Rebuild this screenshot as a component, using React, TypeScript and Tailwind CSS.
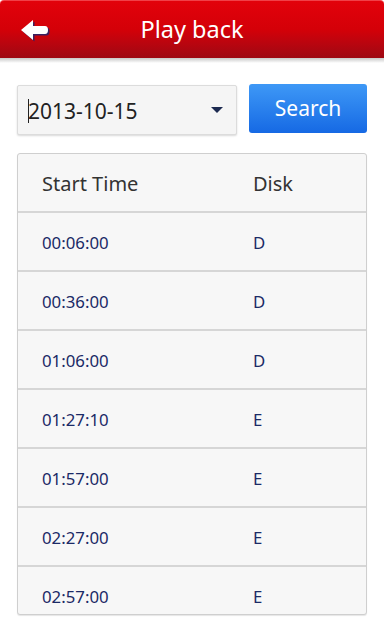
import React from "react";

const rows = [
  ["00:06:00", "D"],
  ["00:36:00", "D"],
  ["01:06:00", "D"],
  ["01:27:10", "E"],
  ["01:57:00", "E"],
  ["02:27:00", "E"],
  ["02:57:00", "E"],
];

function BackArrow() {
  return (
    <svg width="32" height="24" viewBox="0 0 32 24">
      <path
        d="M2 12 L14 2 L14 8 L26 8 Q29 8 29 12 Q29 16 26 16 L14 16 L14 22 Z"
        fill="#3a2060"
        transform="translate(1.5,1.5)"
      />
      <path
        d="M2 12 L14 2 L14 8 L26 8 Q29 8 29 12 Q29 16 26 16 L14 16 L14 22 Z"
        fill="#ffffff"
      />
    </svg>
  );
}

export default function App() {
  return (
    <div
      className="w-[384px] h-[640px] bg-white overflow-hidden flex flex-col"
      style={{ fontFamily: '"Noto Sans", "Open Sans", sans-serif' }}
    >
      <div className="relative h-[58px] shrink-0 rounded-t-[4px] bg-gradient-to-b from-[#e2020b] via-[#d40008] to-[#9e0812] flex items-center justify-center border-t border-[#f04048]">
        <div className="absolute left-[19px] top-[17px]">
          <BackArrow />
        </div>
        <span className="text-white text-[23.5px] leading-none">Play back</span>
      </div>
      <div className="h-[5px] shrink-0 bg-gradient-to-b from-[#c8c8c8] to-white" />
      <div className="flex items-center px-[17px] pt-[20px] gap-[12px]">
        <div className="w-[220px] h-[50px] bg-[#f5f5f5] border border-[#dcdcdc] rounded-[2px] shadow-[0_1px_2px_rgba(0,0,0,0.15)] flex items-center pl-[10px] pr-[13px] mt-[2px]">
          <span className="w-px h-[24px] bg-[#222] mr-[-1px] mt-[2px]" />
          <span className="text-[21px] text-[#222] leading-none flex-1 pt-[3px]">2013-10-15</span>
          <svg width="12" height="6" viewBox="0 0 12 6">
            <path d="M0 0 L12 0 L6 6 Z" fill="#1c2a50" />
          </svg>
        </div>
        <div className="w-[118px] h-[49px] rounded-[3px] bg-gradient-to-b from-[#3e98f6] to-[#1669e4] flex items-center justify-center mt-[-1px]">
          <span className="text-white text-[21px] leading-none">Search</span>
        </div>
      </div>
      <div className="mx-[17px] mt-[18px] h-[462px] border border-[#cfcfcf] rounded-[3px] bg-[#f7f7f7] overflow-hidden shadow-[0_1px_1px_rgba(0,0,0,0.1)]">
        <div className="h-[59px] flex items-center border-b-2 border-[#d6d6d6] text-[20px] text-[#333] pt-[2px]">
          <span className="pl-[24px] w-[235px]">Start Time</span>
          <span>Disk</span>
        </div>
        {rows.map(([t, d], i) => (
          <div
            key={i}
            className="h-[59px] flex items-center border-b-2 border-[#d6d6d6] text-[16.8px] text-[#1b2a66] pt-[2px]"
          >
            <span className="pl-[24px] w-[235px]">{t}</span>
            <span>{d}</span>
          </div>
        ))}
      </div>
    </div>
  );
}
